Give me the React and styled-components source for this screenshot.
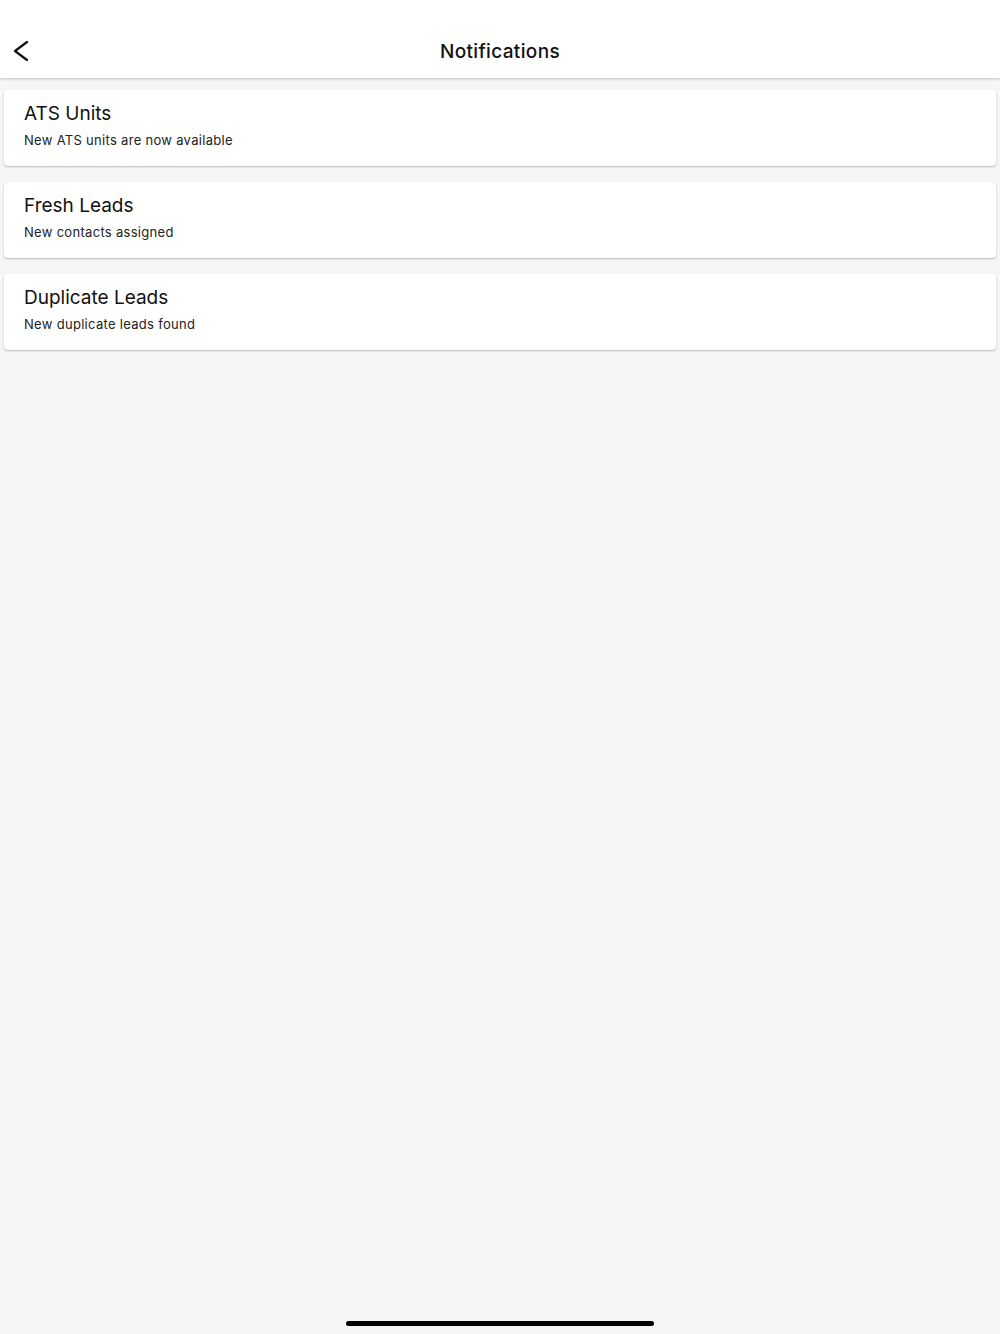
import styled, { createGlobalStyle } from "styled-components";

const Global = createGlobalStyle`
  html, body {
    margin: 0;
    padding: 0;
    background: #f6f6f6;
  }
  body {
    font-family: Inter, "Noto Sans", sans-serif;
    color: #111;
  }
`;

const Screen = styled.div`
  position: relative;
  display: flex;
  flex-direction: column;
  width: 1000px;
  height: 1334px;
  background: #f6f6f6;
  overflow: hidden;
`;

const Header = styled.header`
  position: relative;
  z-index: 2;
  display: flex;
  align-items: center;
  justify-content: center;
  height: 78px;
  padding-top: 24px;
  box-sizing: border-box;
  background: #fff;
  box-shadow: 0 1px 3px rgba(0, 0, 0, 0.22);
`;

const BackButton = styled.button`
  position: absolute;
  left: 8px;
  top: 38px;
  width: 26px;
  height: 26px;
  padding: 0;
  border: 0;
  background: none;
  display: flex;
  align-items: center;
  justify-content: center;
`;

const Title = styled.h1`
  margin: 0;
  font-size: 19px;
  font-weight: 450;
  letter-spacing: 0.35px;
  color: #111;
`;

const List = styled.main`
  display: flex;
  flex-direction: column;
  gap: 16px;
  padding: 12px 4px;
`;

const Card = styled.div`
  display: flex;
  flex-direction: column;
  gap: 5px;
  height: 76px;
  box-sizing: border-box;
  padding: 12px 20px;
  background: #fff;
  border-radius: 4px;
  box-shadow: 0 1px 2px rgba(0, 0, 0, 0.25);
`;

const CardTitle = styled.div`
  font-size: 19px;
  line-height: 24px;
  color: #111;
`;

const CardText = styled.div`
  font-size: 13px;
  line-height: 18px;
  letter-spacing: 0.3px;
  color: #222;
`;

const HomeIndicator = styled.div`
  position: absolute;
  left: 346px;
  bottom: 8px;
  width: 308px;
  height: 5px;
  border-radius: 3px;
  background: #000;
`;

const items = [
  { title: "ATS Units", text: "New ATS units are now available" },
  { title: "Fresh Leads", text: "New contacts assigned" },
  { title: "Duplicate Leads", text: "New duplicate leads found" },
];

export default function App() {
  return (
    <Screen>
      <Global />
      <Header>
        <BackButton aria-label="Back">
          <svg width="18" height="20" viewBox="0 0 18 20" fill="none">
            <path
              d="M15 1 L3 10 L15 19"
              stroke="#111"
              strokeWidth="2.2"
              strokeLinecap="round"
              strokeLinejoin="round"
            />
          </svg>
        </BackButton>
        <Title>Notifications</Title>
      </Header>
      <List>
        {items.map((item) => (
          <Card key={item.title}>
            <CardTitle>{item.title}</CardTitle>
            <CardText>{item.text}</CardText>
          </Card>
        ))}
      </List>
      <HomeIndicator />
    </Screen>
  );
}
